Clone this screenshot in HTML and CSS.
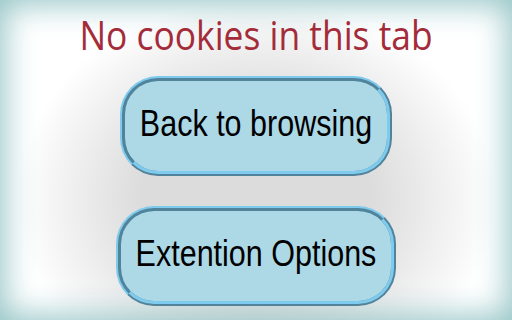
FILE: index.html
```html
<!DOCTYPE html>
<html>
<head>
<meta charset="utf-8">
<link rel="stylesheet" href="styles.css">
</head>
<body>
<main class="page">
  <h1 class="title"><span class="title-text">No cookies in this tab</span></h1>
  <div class="actions">
    <button class="btn"><span class="btn-label">Back to browsing</span></button>
    <button class="btn"><span class="btn-label">Extention Options</span></button>
  </div>
</main>
</body>
</html>
```
FILE: styles.css
```css
html, body {
  margin: 0;
  padding: 0;
  width: 512px;
  height: 320px;
  overflow: hidden;
}
body {
  background: radial-gradient(ellipse 240px 200px at 256px 200px, #dcdcdc 48%, #ffffff 100%);
}
.page {
  width: 512px;
  height: 320px;
  box-sizing: border-box;
  display: flex;
  flex-direction: column;
  align-items: center;
  box-shadow: inset 0 0 32px 4px #93c3c5;
}
.title {
  margin: 8px 0 0 0;
  height: 52px;
  line-height: 52px;
  font-family: "Open Sans", "Noto Sans", sans-serif;
  font-weight: 400;
  font-size: 35.4px;
  color: #a42c3a;
  white-space: nowrap;
}
.title-text {
  display: inline-block;
  transform: scaleY(1.15);
}
.actions {
  margin-top: 16px;
  display: flex;
  flex-direction: column;
  align-items: center;
  gap: 30px;
}
.btn {
  height: 100px;
  box-sizing: border-box;
  padding: 0 15px 5px 15px;
  border: 5px ridge #7ecbee;
  border-radius: 38px;
  background: #add8e6;
  color: #000;
  font-family: "Liberation Sans", Arial, sans-serif;
  font-size: 30.5px;
  line-height: 1.15;
  cursor: pointer;
}
.btn-label {
  display: inline-block;
  white-space: nowrap;
  transform: scaleY(1.22);
}
```
